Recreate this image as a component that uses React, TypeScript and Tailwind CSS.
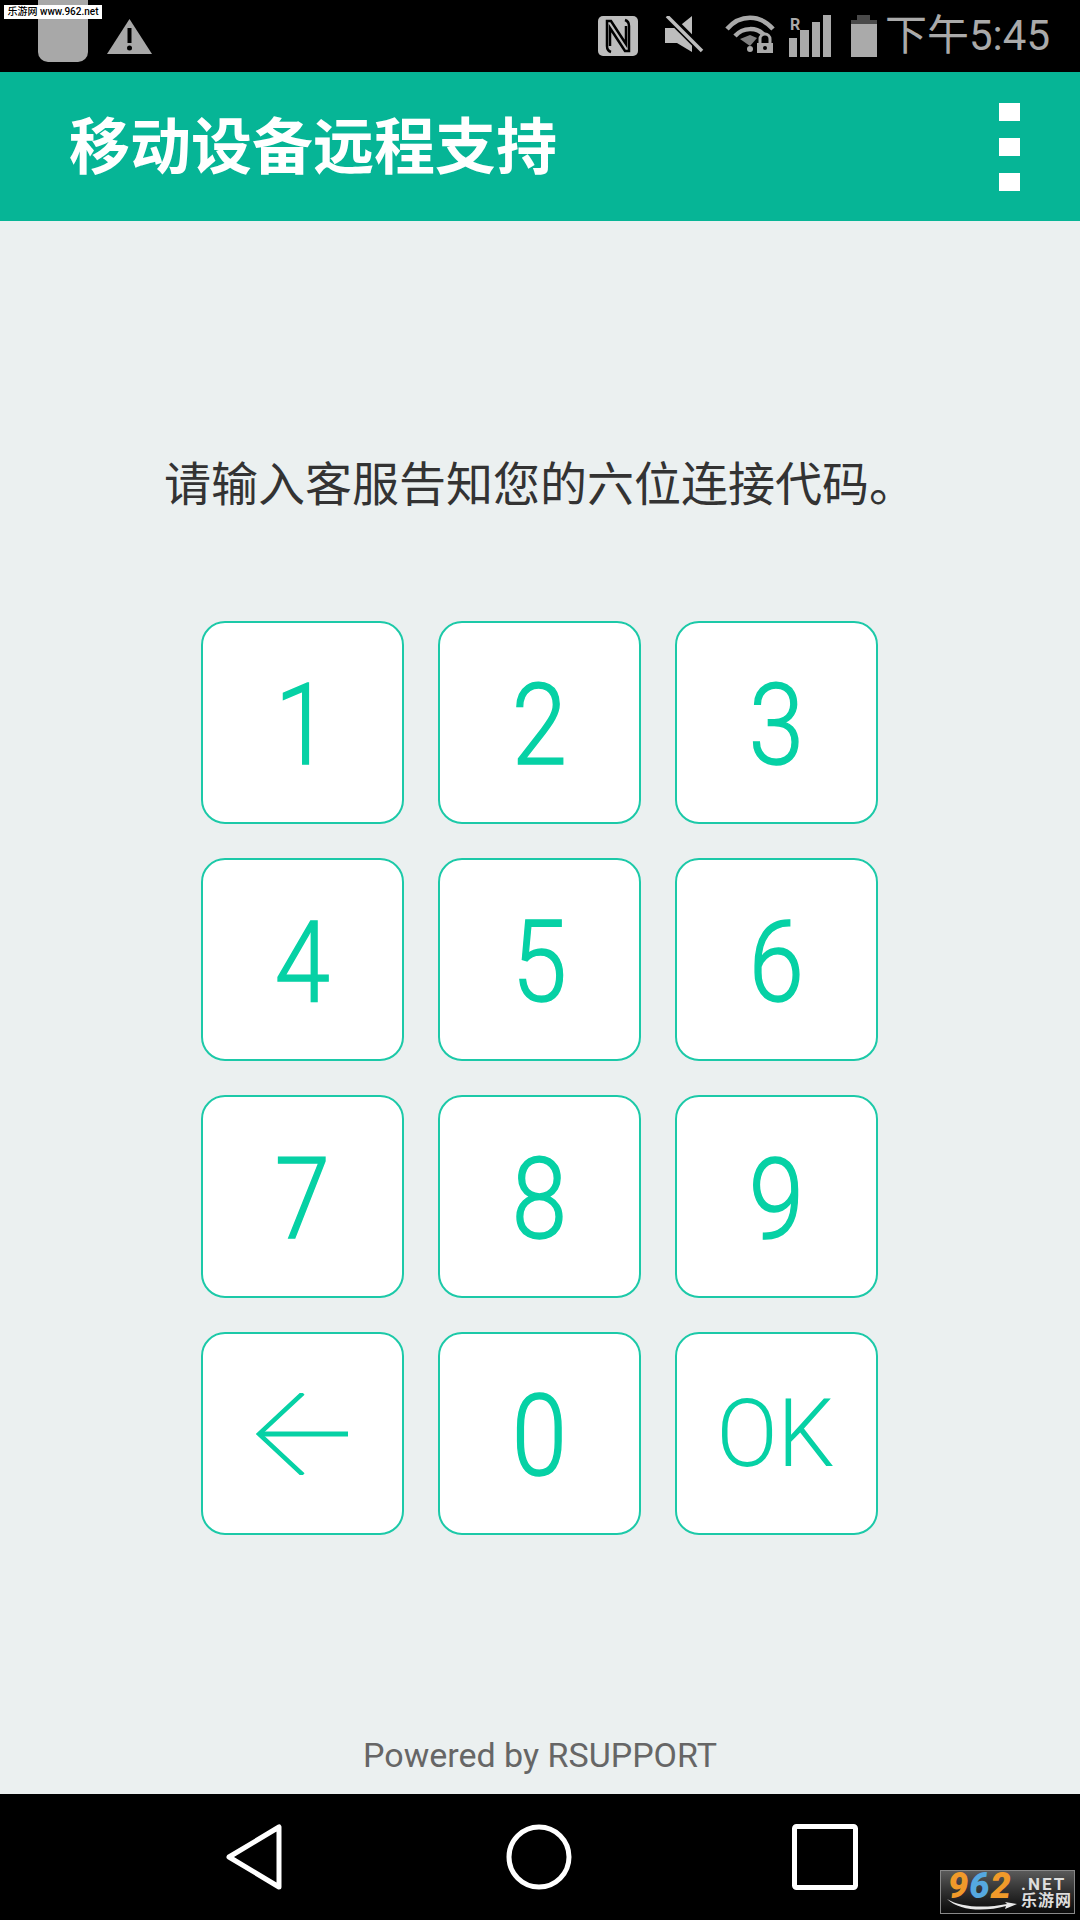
const cjk = "font-['Roboto','Noto_Sans_CJK_SC',sans-serif]";

const keys = ["1", "2", "3", "4", "5", "6", "7", "8", "9", "back", "0", "OK"];

function NfcIcon() {
  return (
    <svg width="40" height="40" viewBox="0 0 40 40">
      <rect width="40" height="40" rx="5" fill="#bdbdbd" />
      <path d="M13 36C10 35 9 33 9 30V5h4l15 23V10" fill="none" stroke="#000" strokeWidth="2.5" />
      <path d="M27 4c3 1 4 3 4 6v25h-4L12 12v18" fill="none" stroke="#000" strokeWidth="2.5" />
    </svg>
  );
}

function MuteIcon() {
  return (
    <svg width="39" height="37" viewBox="0 0 39 37">
      <path d="M0 12h12L27 0v36L12 27H0z" fill="#bdbdbd" />
      <path d="M2 -1l37 37" stroke="#000" strokeWidth="8" />
      <path d="M2 0l35 35" stroke="#bdbdbd" strokeWidth="3.5" />
    </svg>
  );
}

function WifiIcon() {
  return (
    <svg width="50" height="38" viewBox="0 0 50 38">
      <path d="M2 14C15 -1 35 -1 48 14" fill="none" stroke="#aaa" strokeWidth="4.5" />
      <path d="M10 21c8-9 22-9 29-1" fill="none" stroke="#aaa" strokeWidth="4.5" />
      <path d="M15 24l10-4 7 3-7 8z" fill="#808080" />
      <circle cx="25" cy="34" r="3" fill="#aaa" />
      <rect x="32" y="28" width="16" height="11" fill="#aaa" />
      <path d="M35 28v-4a5 5 0 0 1 10 0v4" fill="none" stroke="#aaa" strokeWidth="3" />
      <circle cx="40" cy="33" r="2" fill="#000" />
    </svg>
  );
}

function SignalIcon() {
  return (
    <svg width="42" height="42" viewBox="0 0 42 42">
      <rect x="0" y="23" width="8" height="19" fill="#aaa" />
      <rect x="11" y="15" width="9" height="27" fill="#aaa" />
      <rect x="23" y="7" width="8" height="35" fill="#aaa" />
      <rect x="34" y="0" width="8" height="42" fill="#aaa" />
      <text x="1" y="15" fontSize="16" fontWeight="700" fill="#aaa" fontFamily="Roboto, sans-serif">R</text>
    </svg>
  );
}

function BatteryIcon() {
  return (
    <svg width="26" height="42" viewBox="0 0 26 42">
      <path d="M6 0h13v5h7v4H0V5h6z" fill="#4a4a4a" />
      <rect x="0" y="9" width="26" height="33" fill="#aaa" />
    </svg>
  );
}

function BackArrow() {
  return (
    <svg width="92" height="82" viewBox="0 0 92 82">
      <path d="M4 41h88" stroke="#06d1a5" strokeWidth="5" fill="none" />
      <path d="M47 0L3 41l44 41" stroke="#06d1a5" strokeWidth="4.5" fill="none" />
    </svg>
  );
}

function KeyLabel({ value }: { value: string }) {
  if (value === "back") return <BackArrow />;
  if (value === "OK") {
    return <span className="scale-x-[0.96] text-[94px] font-light leading-none text-[#06d1a5]">OK</span>;
  }
  return (
    <span className="mt-[5px] scale-x-[0.88] text-[113px] font-light leading-none text-[#06d1a5] [-webkit-text-stroke:1.5px_#06d1a5]">
      {value}
    </span>
  );
}

export default function App() {
  return (
    <div className={`relative flex h-[1920px] w-[1080px] flex-col overflow-hidden bg-[#ebf0f0] ${cjk}`}>
      <div className="absolute left-1 top-[5px] z-10 flex h-[14px] w-[98px] items-center justify-center bg-white text-[10px] font-medium leading-none text-black">
        乐游网 www.962.net
      </div>

      <header className="flex h-[72px] shrink-0 items-center bg-black pl-[38px] pr-[30px]">
        <div className="mb-[10px] h-[62px] w-[50px] rounded-b-[10px] bg-[#a8a8a8]" />
        <svg className="ml-[19px]" width="45" height="35" viewBox="0 0 45 35">
          <path d="M22.5 0L45 35H0z" fill="#a8a8a8" />
          <rect x="20.5" y="9" width="4" height="15" fill="#000" />
          <circle cx="22.5" cy="29" r="2.5" fill="#000" />
        </svg>
        <div className="ml-auto flex items-center">
          <NfcIcon />
          <div className="mb-[3px] ml-[27px]"><MuteIcon /></div>
          <div className="mb-[4px] ml-[21px]"><WifiIcon /></div>
          <div className="ml-[14px]"><SignalIcon /></div>
          <div className="ml-[20px]"><BatteryIcon /></div>
          <span className="ml-[8px] text-[42px] leading-none text-[#aaaaaa]">下午5:45</span>
        </div>
      </header>

      <div className="flex h-[149px] shrink-0 items-center justify-between bg-[#06b596] pl-[69px] pr-[60px]">
        <h1 className="pt-[4px] text-[61px] font-bold leading-none text-white">移动设备远程支持</h1>
        <div className="flex flex-col gap-[17px]">
          <div className="h-[18px] w-[21px] bg-white" />
          <div className="h-[18px] w-[21px] bg-white" />
          <div className="h-[18px] w-[21px] bg-white" />
        </div>
      </div>

      <main className="flex flex-1 flex-col items-center">
        <p className="mt-[234px] text-[47px] leading-[60px] text-[#333333]">请输入客服告知您的六位连接代码。</p>
        <div className="mr-[2px] mt-[106px] grid grid-cols-[repeat(3,203px)] gap-[34px]">
          {keys.map((key) => (
            <button
              key={key}
              type="button"
              className="flex h-[203px] items-center justify-center rounded-[24px] border-2 border-[#1cc9a8] bg-white"
            >
              <KeyLabel value={key} />
            </button>
          ))}
        </div>
        <p className="mt-auto pb-[19px] text-[34px] leading-[40px] text-[#666666]">Powered by RSUPPORT</p>
      </main>

      <nav className="relative flex h-[126px] shrink-0 items-center bg-black pl-[226px]">
        <svg width="56" height="66" viewBox="0 0 56 66">
          <path d="M53 3v60L3 33z" fill="none" stroke="#fff" strokeWidth="5" strokeLinejoin="round" />
        </svg>
        <svg className="ml-[224px]" width="66" height="66" viewBox="0 0 66 66">
          <circle cx="33" cy="33" r="30" fill="none" stroke="#fff" strokeWidth="5" />
        </svg>
        <svg className="ml-[220px]" width="66" height="66" viewBox="0 0 66 66">
          <rect x="2.5" y="2.5" width="61" height="61" rx="2" fill="none" stroke="#fff" strokeWidth="5" />
        </svg>
        <div className="absolute right-[5px] top-[76px] flex h-[44px] w-[135px] items-center border border-[#888] bg-gradient-to-b from-[#5a5a5a] to-[#0a0a0a] pl-[7px]">
          <span className="mb-[12px] w-[73px] text-[36px] font-black italic leading-none tracking-[1px] text-[#f09a2a]">
            9<span className="text-[#55a8e0]">6</span>2
          </span>
          <div className="flex flex-col leading-none text-[#dddddd]">
            <span className="text-[17px] font-bold tracking-[2px]">.NET</span>
            <span className="text-[16px] font-bold tracking-[1px]">乐游网</span>
          </div>
          <svg className="absolute bottom-[2px] left-[6px]" width="70" height="12" viewBox="0 0 70 12">
            <path d="M0 0C14 9 40 9 60 5l-2-2 12 2-12 5 1-3C38 13 12 12 0 0z" fill="#e8e8e8" />
          </svg>
        </div>
      </nav>
    </div>
  );
}
